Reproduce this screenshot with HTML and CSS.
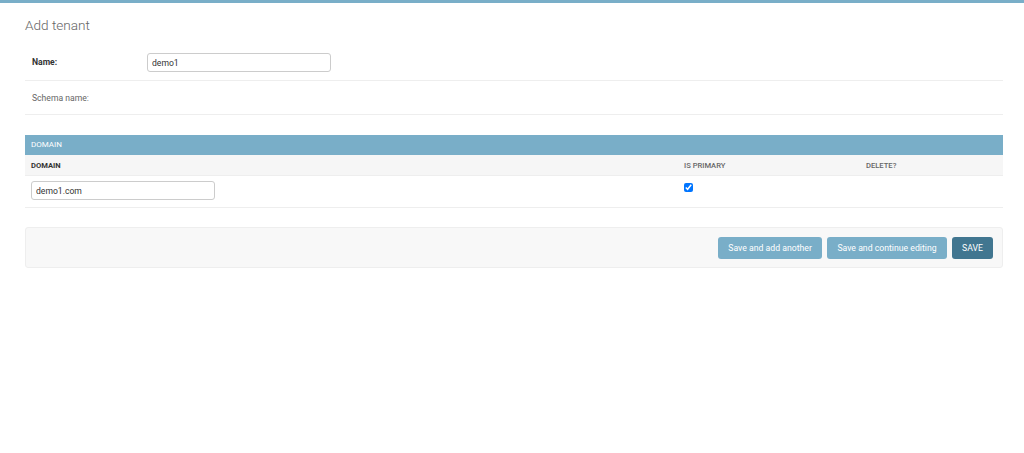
FILE: index.html
```html
<!DOCTYPE html>
<html lang="en">
<head>
<meta charset="utf-8">
<title>Add tenant</title>
<link rel="stylesheet" href="styles.css">
</head>
<body>
<div class="topbar"></div>
<div class="content">
  <h1>Add tenant</h1>
  <form>
    <fieldset class="module aligned">
      <div class="form-row">
        <label class="required">Name:</label>
        <input type="text" class="vText" value="demo1">
      </div>
      <div class="form-row">
        <label>Schema name:</label>
        <div class="readonly"></div>
      </div>
    </fieldset>

    <div class="inline-group">
      <div class="inline-caption">Domain</div>
      <table class="tabular">
        <colgroup>
          <col class="c1"><col class="c2"><col class="c3">
        </colgroup>
        <thead>
          <tr>
            <th class="required">Domain</th>
            <th>Is primary</th>
            <th>Delete?</th>
          </tr>
        </thead>
        <tbody>
          <tr>
            <td><input type="text" class="vText" value="demo1.com"></td>
            <td><input type="checkbox" class="check" checked></td>
            <td></td>
          </tr>
        </tbody>
      </table>
    </div>

    <div class="submit-row">
      <button type="button" class="btn">Save and add another</button>
      <button type="button" class="btn">Save and continue editing</button>
      <button type="button" class="btn default">SAVE</button>
    </div>
  </form>
</div>
</body>
</html>
```

FILE: styles.css
```css
html, body {
  margin: 0;
  padding: 0;
  background: #fff;
}

body {
  font-family: Roboto, "Liberation Sans", sans-serif;
  color: #333;
}

.topbar {
  height: 3px;
  background: #79aec8;
}

.content {
  padding: 14px 21px 0 25px;
}

h1 {
  margin: 0 0 11px;
  font-size: 13.6px;
  line-height: 16px;
  font-weight: 300;
  color: #666;
}

fieldset {
  margin: 0;
  padding: 0;
  border: 0;
  min-width: 0;
}

.form-row {
  display: flex;
  align-items: center;
  padding: 9px 7px 8px;
  min-height: 16px;
  border-bottom: 1px solid #eee;
}

.form-row label {
  width: 115px;
  flex: none;
  font-size: 8.6px;
  line-height: 1;
  color: #666;
}

.form-row label.required {
  font-weight: 700;
  color: #333;
}

.vText {
  display: block;
  box-sizing: border-box;
  width: 184px;
  height: 19px;
  margin: 0;
  padding: 0 4px;
  border: 1px solid #ccc;
  border-radius: 3px;
  background: #fff;
  font-family: Roboto, "Liberation Sans", sans-serif;
  font-size: 8.6px;
  color: #333;
  outline: none;
}

.inline-group {
  margin-top: 20px;
}

.inline-caption {
  height: 20px;
  line-height: 20px;
  padding: 0 6px;
  background: #79aec8;
  color: #fff;
  font-size: 8px;
  text-transform: uppercase;
}

.tabular {
  width: 100%;
  border-collapse: collapse;
  table-layout: fixed;
}

.tabular col.c1 { width: 653px; }
.tabular col.c2 { width: 182px; }
.tabular col.c3 { width: 143px; }

.tabular th {
  height: 20px;
  padding: 0 6px;
  background: #f6f6f6;
  border-bottom: 1px solid #eee;
  text-align: left;
  font-size: 7.6px;
  font-weight: 500;
  color: #666;
  text-transform: uppercase;
}

.tabular th.required {
  font-weight: 700;
  color: #333;
}

.tabular td {
  height: 26px;
  padding: 5px 6px 0;
  vertical-align: top;
  border-bottom: 1px solid #eee;
}

.check {
  display: block;
  width: 9px;
  height: 9px;
  margin: 2px 0 0;
  padding: 0;
}

.submit-row {
  margin-top: 19px;
  padding: 9px 9px 8px;
  display: flex;
  justify-content: flex-end;
  gap: 5.5px;
  background: #f8f8f8;
  border: 1px solid #eee;
  border-radius: 3px;
}

.btn {
  height: 22px;
  padding: 0 10px;
  border: 0;
  border-radius: 3px;
  background: #79aec8;
  color: #fff;
  font-family: Roboto, "Liberation Sans", sans-serif;
  font-size: 8.7px;
  cursor: pointer;
}

.btn.default {
  background: #417690;
}
```
